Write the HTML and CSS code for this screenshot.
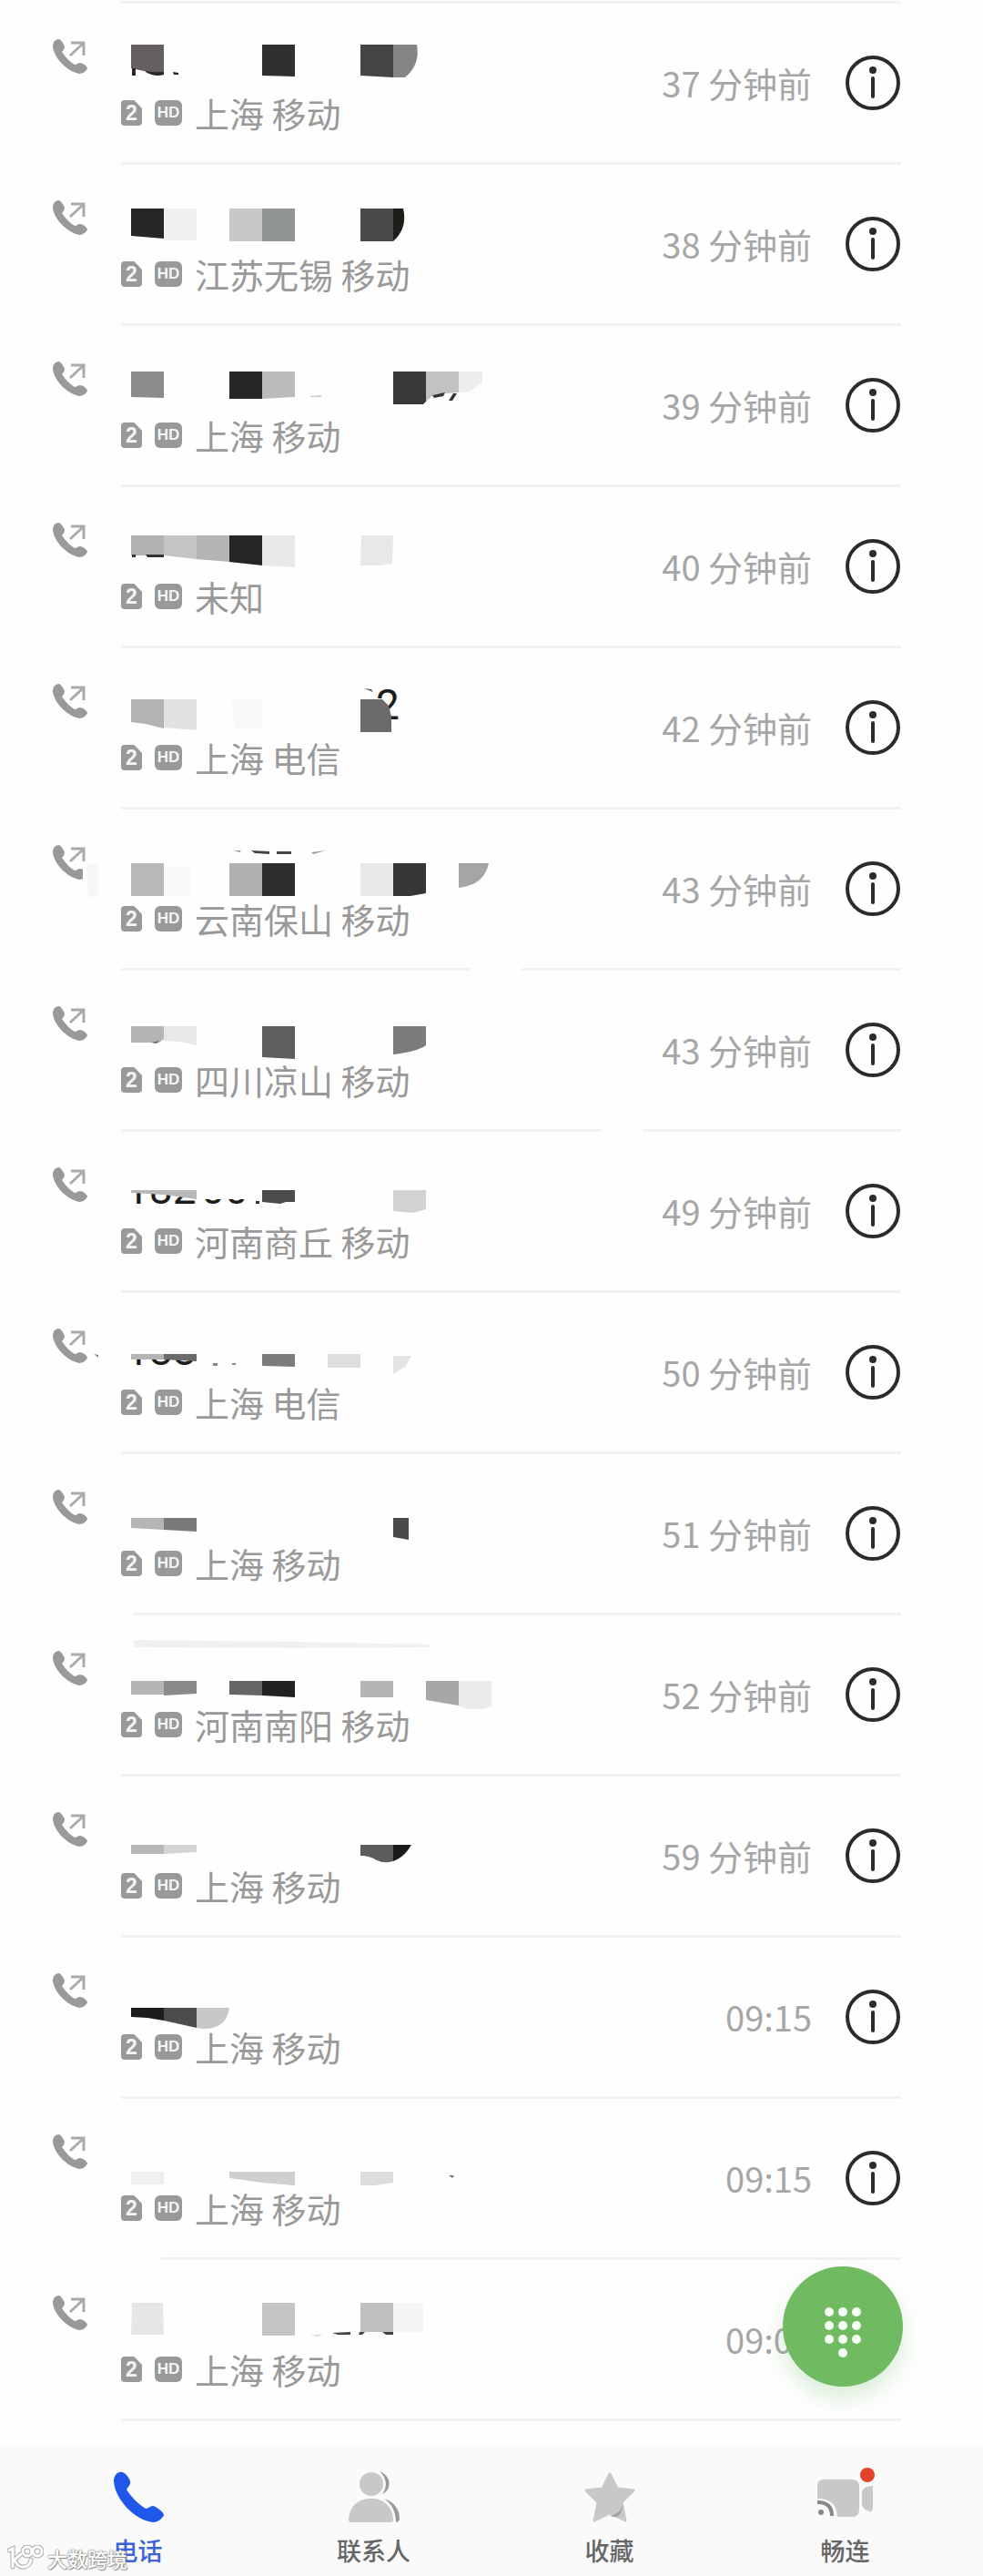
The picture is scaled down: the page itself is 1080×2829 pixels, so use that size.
FILE: index.html
```
<!DOCTYPE html>
<html lang="zh-CN">

<head>
  <meta charset="UTF-8">
  <meta name="viewport" content="width=device-width, initial-scale=1.0">
  <title>通话记录</title>
  <link rel="stylesheet" href="styles.css">
</head>

<body>

  <svg class="sprite" width="0" height="0" aria-hidden="true">
    <symbol id="icon-handset" viewBox="0 0 56 56">
      <path d="M10 1C5 0 1 5 1 11c1 19 23 43 43 45 6 0 11-5 12-8 0-3-8-9-12-10-3 0-5 3-8 3-8-5-16-13-21-21 2-3 5-6 4-9-1-4-6-10-9-10z" />
    </symbol>
    <symbol id="icon-outgoing" viewBox="0 0 38 38">
      <path fill="#999" d="M7 0C3 0 0 3 0 8c1 12 15 27 29 30 4 0 8-3 9-6 0-2-5-6-8-6-2 0-4 2-6 2-5-3-10-8-14-14 2-2 3-4 3-6C12 5 9 1 7 0z" />
      <path fill="none" stroke="#aaa" stroke-width="3" d="M19 18L33 5M20 4h14v14" />
    </symbol>
    <symbol id="icon-info" viewBox="0 0 62 62">
      <circle cx="31" cy="31" r="28" fill="none" stroke="#2b2b2b" stroke-width="4" />
      <circle cx="31" cy="17" r="4" fill="#2b2b2b" />
      <path stroke="#2b2b2b" stroke-width="4" stroke-linecap="round" d="M31 26v20" />
    </symbol>
  </svg>

  <main class="calls">
    <ul class="call-list">

      <li class="call">
        <svg class="call-type"><use href="#icon-outgoing" /></svg>
        <div class="call-row">
          <div class="call-body">
            <svg class="number" viewBox="133 40 427 60">
              <path fill="#635f63" d="M144 45h36v32l-8 1-14-4-14-3z" />
              <path fill="#2b252b" d="M145 71h4v8h-4zM160 74q10 2 20 1v3q-10 3-20-3zM190 75l6 1v2h-5z" />
              <path fill="#303030" d="M288 45h36v35l-36-1z" />
              <path fill="#444" d="M396 45h36v36l-36-2z" />
              <path fill="#858585" d="M432 45h26q4 22-13 36h-13z" />
            </svg>
            <div class="meta"><span class="sim">2</span><span class="hd">HD</span><span class="place">上海 移动</span></div>
          </div>
          <time class="when">37 分钟前</time>
          <button class="info" aria-label="详情"><svg><use href="#icon-info" /></svg></button>
        </div>
      </li>

      <li class="call">
        <svg class="call-type"><use href="#icon-outgoing" /></svg>
        <div class="call-row">
          <div class="call-body">
            <svg class="number" viewBox="133 40 427 60">
              <path fill="#262626" d="M144 48h36v33l-36-3z" />
              <path fill="#f0f0f0" d="M180 48h36v35h-36z" />
              <path fill="#c8c8c8" d="M252 48h36v36h-36z" />
              <path fill="#929692" d="M288 48h36v36h-36z" />
              <path fill="#4a4a4a" d="M396 48h36v36h-36z" />
              <path fill="#1d1d19" d="M432 48h11q5 22-11 36z" />
            </svg>
            <div class="meta"><span class="sim">2</span><span class="hd">HD</span><span class="place">江苏无锡 移动</span></div>
          </div>
          <time class="when">38 分钟前</time>
          <button class="info" aria-label="详情"><svg><use href="#icon-info" /></svg></button>
        </div>
      </li>

      <li class="call">
        <svg class="call-type"><use href="#icon-outgoing" /></svg>
        <div class="call-row">
          <div class="call-body">
            <svg class="number" viewBox="133 40 427 60">
              <path fill="#8c8c8c" d="M144 50h36v29l-36-1z" />
              <path fill="#262626" d="M252 50h36v30h-36z" />
              <path fill="#bcbcbc" d="M288 50h36v28l-36 2z" />
              <path fill="#ccc" d="M341 77l11-1 2 2h-13z" />
              <path fill="#383838" d="M432 50h36v33l-3 3h-33z" />
              <path fill="#c2c2c2" d="M468 50h36v23l-27 2-9 8z" />
              <path fill="#333" d="M475 76l14-3-2 4-10 2zM498 74h4l-5 8h-4z" />
              <path fill="#ededed" d="M504 50h26v12l-14 10-12 1z" />
            </svg>
            <div class="meta"><span class="sim">2</span><span class="hd">HD</span><span class="place">上海 移动</span></div>
          </div>
          <time class="when">39 分钟前</time>
          <button class="info" aria-label="详情"><svg><use href="#icon-info" /></svg></button>
        </div>
      </li>

      <li class="call">
        <svg class="call-type"><use href="#icon-outgoing" /></svg>
        <div class="call-row">
          <div class="call-body">
            <svg class="number" viewBox="133 40 427 60">
              <path fill="#b2b2b2" d="M144 53h36v22h-36z" />
              <path fill="#c4c4c4" d="M180 53h36v26l-36-4z" />
              <path fill="#b4b4b4" d="M216 53h36v29l-36-3z" />
              <path fill="#262626" d="M252 53h36v33l-36-4z" />
              <path fill="#e8e8e8" d="M288 53h36v35l-36-2zM397 53h35l-1 31-14 2h-21z" />
              <path fill="#333" d="M145 74h4v3h-4zM160 74h20v3h-18z" />
            </svg>
            <div class="meta"><span class="sim">2</span><span class="hd">HD</span><span class="place">未知</span></div>
          </div>
          <time class="when">40 分钟前</time>
          <button class="info" aria-label="详情"><svg><use href="#icon-info" /></svg></button>
        </div>
      </li>

      <li class="call">
        <svg class="call-type"><use href="#icon-outgoing" /></svg>
        <div class="call-row">
          <div class="call-body">
            <svg class="number" viewBox="133 40 427 60">
              <text x="413" y="78">2</text>
              <path fill="#b3b3b3" d="M144 56h36v32l-20-5-16-2z" />
              <path fill="#e2e2e2" d="M180 56h36v34l-36-3z" />
              <path fill="#f8f8f8" d="M254 56h34v32h-30z" />
              <path fill="#fefefe" d="M409 56l8 1 9 8v16h-17z" />
              <path fill="#6a6a6a" d="M396 56h24l7 7 3 12v17h-34z" />
              <path fill="#555" d="M400 44l8 1 2 3z" />
            </svg>
            <div class="meta"><span class="sim">2</span><span class="hd">HD</span><span class="place">上海 电信</span></div>
          </div>
          <time class="when">42 分钟前</time>
          <button class="info" aria-label="详情"><svg><use href="#icon-info" /></svg></button>
        </div>
      </li>

      <li class="call">
        <svg class="call-type"><use href="#icon-outgoing" /></svg>
        <div class="call-row">
          <div class="call-body">
            <svg class="number" viewBox="133 40 427 60">
              <path fill="#fefefe" d="M91 58h8v30h-8z" />
              <path fill="#f7f7f7" d="M95 60h13v36h-11z" />
              <path fill="#b8b8b8" d="M144 59h36v36h-36z" />
              <path fill="#f9f9f9" d="M180 63h30v32h-30z" />
              <path fill="#b0b0b0" d="M252 59h36v36h-36z" />
              <path fill="#2e2e2e" d="M288 59h36v36h-36z" />
              <path fill="#e8e8e8" d="M396 59h36v36h-36z" />
              <path fill="#363636" d="M432 59h36v33l-17 3h-19z" />
              <path fill="#a5a5a5" d="M504 59h33q-5 24-33 27z" />
              <path fill="#444" d="M276 45l20 1v3l-16-1zM304 46h16v3h-16z" />
              <path fill="#999" d="M257 45h8l-2 2zM342 47l16-2-14 4z" />
              <path fill="#fefefe" d="M517 170h56v12h-56z" />
            </svg>
            <div class="meta"><span class="sim">2</span><span class="hd">HD</span><span class="place">云南保山 移动</span></div>
          </div>
          <time class="when">43 分钟前</time>
          <button class="info" aria-label="详情"><svg><use href="#icon-info" /></svg></button>
        </div>
      </li>

      <li class="call">
        <svg class="call-type"><use href="#icon-outgoing" /></svg>
        <div class="call-row">
          <div class="call-body">
            <svg class="number" viewBox="133 40 427 60">
              <path fill="#b5b5b5" d="M144 61h36v14l-5 4h-31z" />
              <path fill="#666" d="M166 79l9-2-3 3z" />
              <path fill="#e8e8e8" d="M180 61h36v21l-18-4-18-1z" />
              <path fill="#5f5d5f" d="M288 61h36v36l-36-2z" />
              <path fill="#7c7c7c" d="M432 61h36v21q-10 7-36 10z" />
              <path fill="#fefefe" d="M660 170h47v12h-47z" />
            </svg>
            <div class="meta"><span class="sim">2</span><span class="hd">HD</span><span class="place">四川凉山 移动</span></div>
          </div>
          <time class="when">43 分钟前</time>
          <button class="info" aria-label="详情"><svg><use href="#icon-info" /></svg></button>
        </div>
      </li>

      <li class="call">
        <svg class="call-type"><use href="#icon-outgoing" /></svg>
        <div class="call-row">
          <div class="call-body">
            <svg class="number" viewBox="133 40 427 60">
              <text x="138" y="79">182</text>
              <text x="221" y="79">00</text>
              <path fill="#fefefe" d="M138 40h150v24H138zM217 60h71v14h-71z" />
              <path fill="#b8b8b8" d="M144 64h72v10l-36-5-36-2z" />
              <path fill="#4c4c4c" d="M288 64h36v13h-10l-6 2-20-2z" />
              <path fill="#333" d="M281 76h4v3h-4z" />
              <path fill="#d2d2d2" d="M432 64h36v21l-14 4-22-2z" />
            </svg>
            <div class="meta"><span class="sim">2</span><span class="hd">HD</span><span class="place">河南商丘 移动</span></div>
          </div>
          <time class="when">49 分钟前</time>
          <button class="info" aria-label="详情"><svg><use href="#icon-info" /></svg></button>
        </div>
      </li>

      <li class="call">
        <svg class="call-type"><use href="#icon-outgoing" /></svg>
        <div class="call-row">
          <div class="call-body">
            <svg class="number" viewBox="133 40 427 60">
              <text x="138" y="79">188</text>
              <path fill="#fefefe" d="M138 40h80v27h-80z" />
              <path fill="#b5b5b5" d="M144 67h36v6h-36z" />
              <path fill="#6a6a6a" d="M180 67h36v8l-36-2z" />
              <path fill="#7c7c7c" d="M288 67h36v14l-36-1z" />
              <path fill="#dedede" d="M360 67h36v15h-36z" />
              <path fill="#e4e4e4" d="M432 69h20l-7 12-13 8z" />
              <path fill="#888" d="M103 67l5 1v3zM234 77h5v3h-5zM255 77h4v2h-4z" />
            </svg>
            <div class="meta"><span class="sim">2</span><span class="hd">HD</span><span class="place">上海 电信</span></div>
          </div>
          <time class="when">50 分钟前</time>
          <button class="info" aria-label="详情"><svg><use href="#icon-info" /></svg></button>
        </div>
      </li>

      <li class="call">
        <svg class="call-type"><use href="#icon-outgoing" /></svg>
        <div class="call-row">
          <div class="call-body">
            <svg class="number" viewBox="133 40 427 60">
              <path fill="#b5b5b5" d="M144 70h36v13l-36-2z" />
              <path fill="#7a7a7a" d="M180 70h36v15l-36-2z" />
              <path fill="#4a4a4a" d="M432 70h17v24l-17-3z" />
              <path fill="#fefefe" d="M133 170h14v12h-14z" />
            </svg>
            <div class="meta"><span class="sim">2</span><span class="hd">HD</span><span class="place">上海 移动</span></div>
          </div>
          <time class="when">51 分钟前</time>
          <button class="info" aria-label="详情"><svg><use href="#icon-info" /></svg></button>
        </div>
      </li>

      <li class="call">
        <svg class="call-type"><use href="#icon-outgoing" /></svg>
        <div class="call-row">
          <div class="call-body">
            <svg class="number" viewBox="133 40 427 60">
              <path fill="#f0f0f0" d="M147 27l177 2 148 3v3l-150 1-175-1z" />
              <path fill="#b5b5b5" d="M144 72h36v15h-36z" />
              <path fill="#8a8a8a" d="M180 72h36v14l-36 2z" />
              <path fill="#666" d="M252 72h36v16l-36-1z" />
              <path fill="#222" d="M288 72h36v18l-36-2z" />
              <path fill="#b5b5b5" d="M396 72h36v18h-36z" />
              <path fill="#a8a6a8" d="M468 72h36v27l-36-6z" />
              <path fill="#ebebeb" d="M504 72h36v27l-8 4h-16l-12-3z" />
            </svg>
            <div class="meta"><span class="sim">2</span><span class="hd">HD</span><span class="place">河南南阳 移动</span></div>
          </div>
          <time class="when">52 分钟前</time>
          <button class="info" aria-label="详情"><svg><use href="#icon-info" /></svg></button>
        </div>
      </li>

      <li class="call">
        <svg class="call-type"><use href="#icon-outgoing" /></svg>
        <div class="call-row">
          <div class="call-body">
            <svg class="number" viewBox="133 40 427 60">
              <path fill="#b8b8b8" d="M144 75h36v10h-36z" />
              <path fill="#d4d4d4" d="M180 75h36v8l-36 2z" />
              <path fill="#5c5e5c" d="M396 75h36v18q-10 3-18-1-8-5-18-5z" />
              <path fill="#1a1a1a" d="M432 75h20q-8 14-20 18z" />
            </svg>
            <div class="meta"><span class="sim">2</span><span class="hd">HD</span><span class="place">上海 移动</span></div>
          </div>
          <time class="when">59 分钟前</time>
          <button class="info" aria-label="详情"><svg><use href="#icon-info" /></svg></button>
        </div>
      </li>

      <li class="call">
        <svg class="call-type"><use href="#icon-outgoing" /></svg>
        <div class="call-row">
          <div class="call-body">
            <svg class="number" viewBox="133 40 427 60">
              <path fill="#1c1c1c" d="M144 77h36v14l-18-3-18-1z" />
              <path fill="#4c4c4c" d="M180 77h36v22l-36-8z" />
              <path fill="#c8c8c8" d="M216 77h36q-3 24-30 23l-6-1z" />
            </svg>
            <div class="meta"><span class="sim">2</span><span class="hd">HD</span><span class="place">上海 移动</span></div>
          </div>
          <time class="when">09:15</time>
          <button class="info" aria-label="详情"><svg><use href="#icon-info" /></svg></button>
        </div>
      </li>

      <li class="call">
        <svg class="call-type"><use href="#icon-outgoing" /></svg>
        <div class="call-row">
          <div class="call-body">
            <svg class="number" viewBox="133 40 427 60">
              <path fill="#efefef" d="M144 80h36v14h-36z" />
              <path fill="#cfcfcf" d="M252 80h72v15l-36-3-36-5z" />
              <path fill="#dcdcdc" d="M396 80h36v12l-20 3h-16z" />
              <path fill="#777" d="M493 84h6l-2 3z" />
              <path fill="#fefefe" d="M133 170h44v12h-44z" />
            </svg>
            <div class="meta"><span class="sim">2</span><span class="hd">HD</span><span class="place">上海 移动</span></div>
          </div>
          <time class="when">09:15</time>
          <button class="info" aria-label="详情"><svg><use href="#icon-info" /></svg></button>
        </div>
      </li>

      <li class="call">
        <svg class="call-type"><use href="#icon-outgoing" /></svg>
        <div class="call-row">
          <div class="call-body">
            <svg class="number" viewBox="133 40 427 60">
              <path fill="#e6e6e6" d="M145 47h34l1 35h-36z" />
              <path fill="#c3c6c3" d="M288 47h36v36h-36z" />
              <path fill="#c0c0c0" d="M396 47h36v32h-36z" />
              <path fill="#f5f5f5" d="M432 47h33v32h-33z" />
              <path fill="#444" d="M365 80l20-1v3h-14zM395 79h6l-3 3h-4zM420 79h12v3h-8z" />
              <path fill="#ddd" d="M340 83l14-2-4 3z" />
            </svg>
            <div class="meta"><span class="sim">2</span><span class="hd">HD</span><span class="place">上海 移动</span></div>
          </div>
          <time class="when">09:08</time>
          <button class="info" aria-label="详情"><svg><use href="#icon-info" /></svg></button>
        </div>
      </li>

    </ul>

    <button class="dialpad" aria-label="拨号键盘">
      <svg width="132" height="132" viewBox="0 0 132 132" fill="#f6fff4">
        <circle cx="51" cy="50" r="5" /><circle cx="66" cy="50" r="5" /><circle cx="81" cy="50" r="5" />
        <circle cx="51" cy="65" r="5" /><circle cx="66" cy="65" r="5" /><circle cx="81" cy="65" r="5" />
        <circle cx="51" cy="80" r="5" /><circle cx="66" cy="80" r="5" /><circle cx="81" cy="80" r="5" />
        <circle cx="66" cy="95" r="5" />
      </svg>
    </button>
  </main>

  <nav class="tabs">
    <a class="tab active" href="#calls">
      <svg fill="#1f57ea"><use href="#icon-handset" /></svg>
      <span>电话</span>
    </a>
    <a class="tab" href="#contacts">
      <svg viewBox="0 0 56 56">
        <path fill="#999" d="M34 0c13 5 14 20 3 25 6-8 5-18-3-25zM39 30c12 4 17 13 17 22q0 3-4 4c0-11-4-20-13-26z" />
        <circle cx="25" cy="14" r="13" fill="#c8c8c8" />
        <path fill="#c8c8c8" d="M0 53c1-16 12-23 25-23s23 8 24 23q0 3-3 3H3q-3 0-3-3z" />
      </svg>
      <span>联系人</span>
    </a>
    <a class="tab" href="#favorites">
      <svg viewBox="0 0 56 56">
        <path fill="#c8c8c8" stroke="#c8c8c8" stroke-width="3" stroke-linejoin="round" d="M28 3l8 16 18 2-13 13 4 20-17-8-17 8 4-20L2 21l18-2z" />
        <path fill="#a2a2a2" d="M42 37q-3 10-14 12 6 2 9 0 5-4 5-12z" />
      </svg>
      <span>收藏</span>
    </a>
    <a class="tab" href="#meetime">
      <svg viewBox="0 0 56 56">
        <path fill="#c8c8c8" d="M4 9h31q8 0 8 8v25q0 8-8 8H19Q18 30-3 30V16q0-7 7-7z" />
        <path fill="#c8c8c8" d="M46 22q2-6 12-6v24q-1 6-4 4-8-3-8-8z" />
        <path fill="none" stroke="#888" stroke-width="4" d="M-3 34q16 0 16 15" />
        <circle cx="1" cy="45" r="3" fill="#888" />
        <circle cx="52" cy="4" r="8" fill="#e2432b" />
      </svg>
      <span>畅连</span>
    </a>
  </nav>

  <div class="watermark">
    <svg width="40" height="28" viewBox="0 0 40 28" fill="none" stroke-linecap="round">
      <g stroke="#aaa" stroke-width="5">
        <path d="M2 6l4-2v20M15 10l-8 7M9 18q3 7 10 6 6-1 7-8" />
        <circle cx="22" cy="7" r="5" /><circle cx="33" cy="7" r="5" />
      </g>
      <g stroke="#fff" stroke-width="3">
        <path d="M2 6l4-2v20M15 10l-8 7M9 18q3 7 10 6 6-1 7-8" />
        <circle cx="22" cy="7" r="5" /><circle cx="33" cy="7" r="5" />
      </g>
    </svg>
    <span>大数跨境</span>
  </div>

</body>

</html>
```
FILE: styles.css
```
* {
  box-sizing: border-box;
  margin: 0;
  padding: 0;
}

body {
  position: relative;
  font-family: "Noto Sans CJK SC", "Noto Sans", sans-serif;
  background-color: #fefefe;
  color: #999;
}

button {
  background: none;
  border: none;
  cursor: pointer;
}

.sprite {
  position: absolute;
}

/* Call log */
.calls {
  position: relative;
  padding: 1px 90px 26px 0;
}

.call-list {
  list-style: none;
}

.call-list::before {
  content: "";
  display: block;
  height: 3px;
  margin-left: 133px;
  background-color: #f2f2f2;
}

.call {
  display: flex;
  height: 177px;
}

.call-type {
  flex: none;
  width: 38px;
  height: 38px;
  margin: 39px 37px 0 58px;
}

.call-row {
  flex: 1;
  display: flex;
  align-items: center;
  min-width: 0;
  border-bottom: 3px solid #f1f1f1;
}

.call-body {
  flex: 1;
  min-width: 0;
  padding-top: 6px;
}

/* the masked phone number */
.number {
  display: block;
  width: 427px;
  height: 60px;
  overflow: visible;
}

.number text {
  font-family: Roboto, sans-serif;
  font-size: 46px;
  fill: #1c1c1c;
}

.meta {
  display: flex;
  align-items: center;
  height: 40px;
}

.sim,
.hd {
  height: 28px;
  background-color: #999;
  color: #f4f4f4;
  font-family: "Liberation Sans", sans-serif;
  font-weight: bold;
  line-height: 28px;
  text-align: center;
}

.sim {
  width: 23px;
  margin-right: 14px;
  border-radius: 4px;
  clip-path: polygon(0 0, 62% 0, 100% 32%, 100% 100%, 0 100%);
  font-size: 23px;
}

.hd {
  width: 30px;
  margin-right: 14px;
  border-radius: 6px;
  font-size: 17px;
}

.place,
.when {
  font-size: 38px;
  line-height: 40px;
  white-space: nowrap;
}

.when {
  margin-right: 36px;
  color: #a6a6a6;
}

.info {
  width: 62px;
  height: 62px;
}

.info svg {
  display: block;
  width: 62px;
  height: 62px;
}

.dialpad {
  position: absolute;
  right: 88px;
  bottom: 64px;
  width: 132px;
  height: 132px;
  border-radius: 50%;
  background-color: #70ba62;
  box-shadow: 0 12px 24px rgba(112, 186, 98, 0.25);
}

.dialpad svg {
  display: block;
}

/* Bottom navigation */
.tabs {
  display: grid;
  grid-template-columns: repeat(4, 1fr);
  height: 144px;
  padding: 29px 22px 0;
  background-color: #fafafa;
}

.tab {
  display: flex;
  flex-direction: column;
  align-items: center;
  gap: 15px;
  color: #666;
  font-size: 27px;
  font-weight: 500;
  line-height: 32px;
  text-decoration: none;
}

.tab svg {
  width: 56px;
  height: 56px;
  overflow: visible;
}

.tab.active {
  color: #3d62d8;
}

.watermark {
  position: absolute;
  left: 8px;
  bottom: 4px;
  display: flex;
  align-items: center;
  gap: 4px;
  color: #fff;
  font-size: 22px;
  font-weight: 500;
  line-height: 32px;
  text-shadow: 0 0 2px #888, 0 0 2px #888, 1px 1px 1px #999;
}
```
